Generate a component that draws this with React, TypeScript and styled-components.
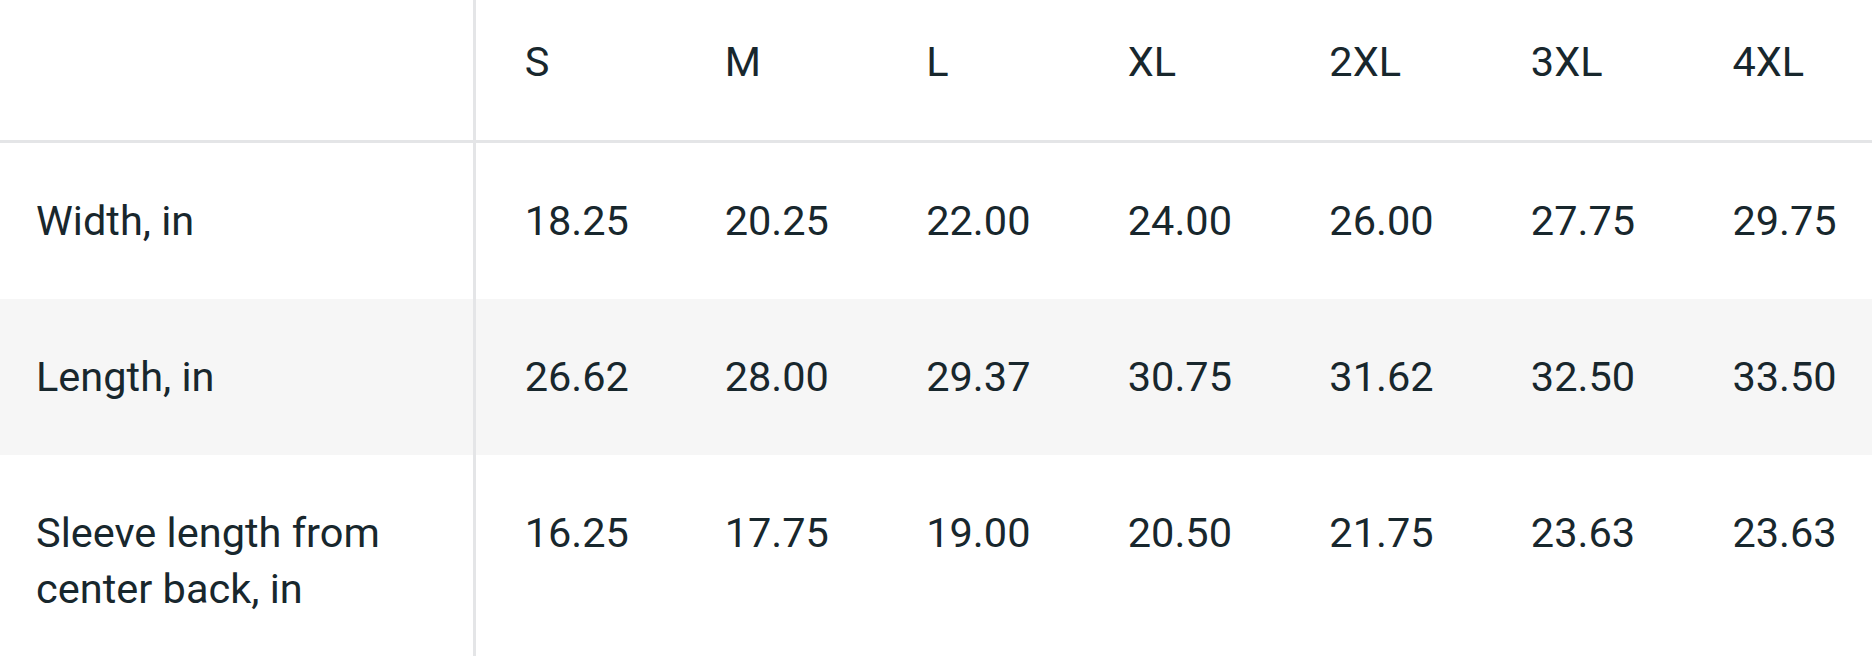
import styled, { createGlobalStyle } from 'styled-components';

const GlobalStyle = createGlobalStyle`
  html, body {
    margin: 0;
    padding: 0;
    background: #fff;
    overflow: hidden;
  }
`;

const Table = styled.table`
  border-collapse: collapse;
  table-layout: fixed;
  font-family: Roboto, "Liberation Sans", sans-serif;
  font-size: 41.5px;
  line-height: 56px;
  color: #18272d;
  width: 1885px;
`;

const HeadCell = styled.th<{ $first?: boolean }>`
  text-align: left;
  font-weight: 400;
  padding: 34px 0 50px ${p => (p.$first ? '36px' : '49px')};
  border-bottom: 3px solid #e4e5e7;
  ${p => p.$first && 'border-right: 3px solid #e4e5e7;'}
`;

const Row = styled.tr<{ $shaded?: boolean }>`
  background: ${p => (p.$shaded ? '#f6f6f6' : '#fff')};
`;

const Label = styled.td`
  padding: 50px 0 50px 36px;
  vertical-align: top;
  border-right: 3px solid #e4e5e7;
`;

const Value = styled.td`
  padding: 50px 0 50px 49px;
  vertical-align: top;
  white-space: nowrap;
`;

const sizes = ['S', 'M', 'L', 'XL', '2XL', '3XL', '4XL'];

const rows = [
  { label: 'Width, in', values: ['18.25', '20.25', '22.00', '24.00', '26.00', '27.75', '29.75'] },
  { label: 'Length, in', values: ['26.62', '28.00', '29.37', '30.75', '31.62', '32.50', '33.50'] },
  { label: 'Sleeve length from center back, in', values: ['16.25', '17.75', '19.00', '20.50', '21.75', '23.63', '23.63'] },
];

export default function App() {
  return (
    <>
      <GlobalStyle />
      <Table>
        <colgroup>
          <col style={{ width: 474 }} />
          {sizes.map(s => <col key={s} style={{ width: 201.5 }} />)}
        </colgroup>
        <thead>
          <tr>
            <HeadCell $first />
            {sizes.map(s => <HeadCell key={s}>{s}</HeadCell>)}
          </tr>
        </thead>
        <tbody>
          {rows.map((r, i) => (
            <Row key={r.label} $shaded={i % 2 === 1}>
              <Label>{r.label}</Label>
              {r.values.map((v, j) => <Value key={j}>{v}</Value>)}
            </Row>
          ))}
        </tbody>
      </Table>
    </>
  );
}
